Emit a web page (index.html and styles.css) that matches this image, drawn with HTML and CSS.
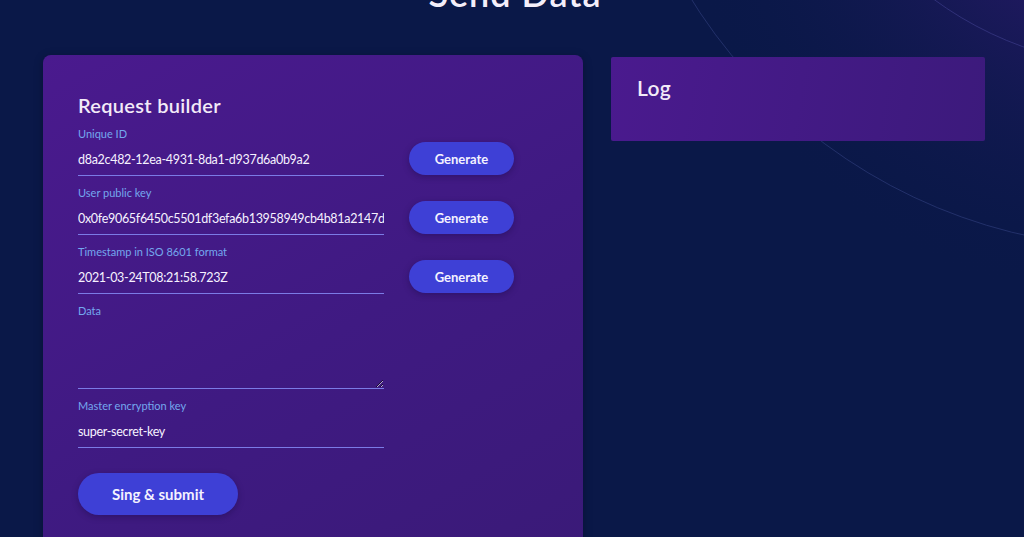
FILE: index.html
```html
<!DOCTYPE html>
<html lang="en">
<head>
  <meta charset="UTF-8">
  <title>Send Data</title>
  <link rel="stylesheet" href="styles.css">
</head>
<body>
  <svg class="backdrop" width="1024" height="537" viewBox="0 0 1024 537">
    <defs>
      <radialGradient id="glow" cx="1100" cy="-120" r="420" gradientUnits="userSpaceOnUse">
        <stop offset="0" stop-color="#3a1a7c" stop-opacity="0.9"/>
        <stop offset="1" stop-color="#0a1848" stop-opacity="0"/>
      </radialGradient>
    </defs>
    <rect width="1024" height="537" fill="url(#glow)"/>
    <circle cx="1140" cy="-281" r="529" fill="none" stroke="#2c3a78" stroke-width="1" opacity="0.7"/>
    <circle cx="1140" cy="-281" r="348" fill="none" stroke="#3a3a88" stroke-width="1" opacity="0.7"/>
  </svg>

  <div class="page">
    <h1 class="page-title">Send Data</h1>

    <div class="content">
      <div class="card">
        <h2>Request builder</h2>
        <form id="requestForm">
          <div class="row">
            <div class="field">
              <label>Unique ID</label>
              <input type="text" name="uid" value="d8a2c482-12ea-4931-8da1-d937d6a0b9a2">
            </div>
            <button type="button" class="btn">Generate</button>
          </div>

          <div class="row">
            <div class="field">
              <label>User public key</label>
              <input type="text" name="pubkey" value="0x0fe9065f6450c5501df3efa6b13958949cb4b81a2147d6a1b2c3">
            </div>
            <button type="button" class="btn">Generate</button>
          </div>

          <div class="row">
            <div class="field">
              <label>Timestamp in ISO 8601 format</label>
              <input type="text" name="timestamp" value="2021-03-24T08:21:58.723Z">
            </div>
            <button type="button" class="btn">Generate</button>
          </div>

          <div class="row">
            <div class="field">
              <label>Data</label>
              <textarea name="data"></textarea>
            </div>
          </div>

          <div class="row">
            <div class="field">
              <label>Master encryption key</label>
              <input type="text" name="masterkey" value="super-secret-key">
            </div>
          </div>

          <button type="submit" class="btn btn-submit">Sing &amp; submit</button>
        </form>
      </div>

      <div class="log">
        <h2>Log</h2>
      </div>
    </div>
  </div>
</body>
</html>
```

FILE: styles.css
```css
body {
  font-family: Lato, "Noto Sans", sans-serif;
  background: #0a1848;
  color: #f1eefa;
  margin: 0;
  height: 537px;
  overflow: hidden;
  position: relative;
}

.backdrop {
  position: absolute;
  top: 0;
  left: 0;
}

.page {
  position: relative;
}

.page-title {
  margin: -29px 0 0;
  text-align: center;
  font-family: Lato, sans-serif;
  font-weight: 600;
  font-size: 36px;
  line-height: 44px;
  color: #f3eefa;
  letter-spacing: 1px;
  padding-left: 6px;
}

.content {
  display: flex;
  align-items: flex-start;
  gap: 28px;
  padding-left: 43px;
  margin-top: 40px;
}

.card {
  flex-shrink: 0;
  width: 540px;
  box-sizing: border-box;
  padding: 36px 35px 40px;
  border-radius: 8px;
  background: linear-gradient(150deg, #4a1a8e 0%, #3f1a82 55%, #3a1a78 100%);
  box-shadow: 0 2px 10px rgba(0,0,0,0.25);
}

h2 {
  margin: 0;
  font-family: Lato, sans-serif;
  font-weight: 600;
  font-size: 20px;
  line-height: 28px;
  color: #f3eaf8;
  letter-spacing: 0.3px;
}

form {
  margin-top: 7px;
}

.row {
  display: flex;
  align-items: flex-end;
  gap: 25px;
  margin-bottom: 9px;
}

.field {
  width: 306px;
}

label {
  display: block;
  font-size: 11px;
  line-height: 16px;
  color: #74a8ee;
  margin-bottom: 2px;
}

input[type="text"],
textarea {
  display: block;
  width: 100%;
  box-sizing: border-box;
  height: 32px;
  padding: 6px 0;
  background: transparent;
  border: none;
  border-bottom: 1px solid #7b7be6;
  color: #f6f2ff;
  font-family: Lato, "Noto Sans", sans-serif;
  font-size: 12.5px;
  letter-spacing: -0.3px;
  line-height: 18px;
  outline: none;
}

textarea {
  height: 68px;
  resize: vertical;
}

.btn {
  width: 105px;
  height: 33px;
  margin-bottom: 1px;
  border: none;
  border-radius: 17px;
  background: #3e40d6;
  color: #f4f2ff;
  font-family: Lato, "Noto Sans", sans-serif;
  font-weight: bold;
  font-size: 13px;
  cursor: pointer;
  box-shadow: 0 2px 6px rgba(20,10,60,0.35);
}

.btn:hover {
  background: #4a4ce0;
}

.btn-submit {
  display: block;
  width: 160px;
  height: 42px;
  margin-top: 25px;
  border-radius: 21px;
  font-size: 15px;
}

.log {
  flex-shrink: 0;
  width: 374px;
  height: 84px;
  box-sizing: border-box;
  margin-top: 2px;
  padding: 17px 26px;
  background: linear-gradient(100deg, #4a1a8e 0%, #3c1a7c 100%);
  border-radius: 2px;
}

.log h2 {
  font-size: 21px;
}
```
